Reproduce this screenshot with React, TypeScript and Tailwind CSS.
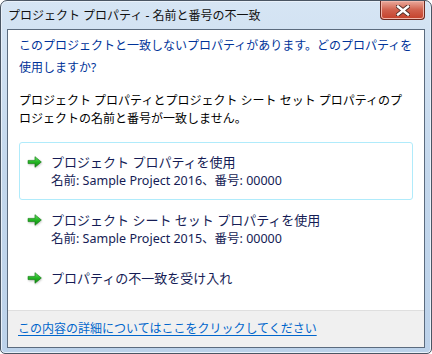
import React from "react";

const jp = { fontFamily: '"Noto Sans", "Noto Sans CJK JP", sans-serif' };

function GreenArrow() {
  return (
    <svg width="17" height="15" viewBox="0 0 16 14" className="shrink-0">
      <defs>
        <linearGradient id="ga" x1="0" y1="0" x2="0" y2="1">
          <stop offset="0" stopColor="#6be86b" />
          <stop offset="0.5" stopColor="#22b522" />
          <stop offset="1" stopColor="#138a13" />
        </linearGradient>
        <filter id="sh" x="-30%" y="-30%" width="160%" height="160%">
          <feGaussianBlur stdDeviation="0.9" />
        </filter>
      </defs>
      <path d="M1.5 6 H8 V2.5 L14 7.5 L8 12.5 V9 H1.5 Z" fill="#777" opacity="0.55" filter="url(#sh)" />
      <path d="M1 5 H7.5 V1.5 L13.5 6.5 L7.5 11.5 V8 H1 Z" fill="url(#ga)" stroke="#0f7a0f" strokeWidth="0.6" strokeLinejoin="round" />
    </svg>
  );
}

function CommandLink({ title, sub, active }: { title: string; sub?: string; active?: boolean }) {
  return (
    <div
      className={`mx-[11px] flex rounded-[3px] border pl-[7px] pt-[9px] pb-[9px] ${
        active ? "border-[#b0ebfb]" : "border-transparent"
      }`}
    >
      <div className="flex h-[20px] w-[24px] items-center">
        <GreenArrow />
      </div>
      <div className="flex flex-col text-[#151c55]">
        <div className="whitespace-nowrap text-[13px] leading-[20px]">{title}</div>
        {sub && <div className="whitespace-nowrap text-[12.5px] leading-[18px]">{sub}</div>}
      </div>
    </div>
  );
}

export default function App() {
  return (
    <div
      style={jp}
      className="flex h-[354px] w-[432px] flex-col rounded-t-[7px] rounded-b-[5px] border border-[#4a5563] bg-gradient-to-b from-[#d6e5f4] via-[#c3d7ec] to-[#bcd2ea] shadow-[inset_0_0_0_1px_#e9f1fa]"
    >
      <div className="flex h-[28px] items-start">
        <div className="flex-1 whitespace-nowrap pl-[7px] pt-[6px] text-[12px] leading-[18px] text-[#111]">
          プロジェクト プロパティ - 名前と番号の不一致
        </div>
        <div className="mr-[6px] flex h-[19px] w-[45px] items-center justify-center rounded-b-[4px] border border-t-0 border-[#6b2a20] bg-gradient-to-b from-[#e9a99c] via-[#d0604c] to-[#c4402a] shadow-[inset_0_0_0_1px_#f2b6aa]">
          <svg width="14" height="11" viewBox="0 0 14 11">
            <path d="M2 1.5 L12 9.5 M12 1.5 L2 9.5" stroke="#4a2a25" strokeWidth="4.2" strokeLinecap="square" />
            <path d="M2 1.5 L12 9.5 M12 1.5 L2 9.5" stroke="#ffffff" strokeWidth="2.4" strokeLinecap="square" />
          </svg>
        </div>
      </div>
      <div className="mx-[6px] flex h-[319px] flex-col border border-[#5b6b7e] bg-white">
        <div className="flex flex-1 flex-col">
          <div className="whitespace-nowrap pl-[11px] pt-[5px] text-[12px] leading-[22px] text-[#003399]">
            このプロジェクトと一致しないプロパティがあります。どのプロパティを
            <br />
            使用しますか?
          </div>
          <div className="mt-[13px] whitespace-nowrap pl-[11px] text-[12px] leading-[18px] text-black">
            プロジェクト プロパティとプロジェクト シート セット プロパティのプ
            <br />
            ロジェクトの名前と番号が一致しません。
          </div>
          <div className="mt-[14px] flex flex-col">
            <CommandLink title="プロジェクト プロパティを使用" sub="名前: Sample Project 2016、番号: 00000" active />
            <CommandLink title="プロジェクト シート セット プロパティを使用" sub="名前: Sample Project 2015、番号: 00000" />
            <CommandLink title="プロパティの不一致を受け入れ" />
          </div>
        </div>
        <div className="flex h-[37px] items-center border-t border-[#dfdfdf] bg-[#f0f0f0] pl-[10px]">
          <span className="whitespace-nowrap text-[12px] leading-[18px] text-[#0066cc] underline underline-offset-2">
            この内容の詳細についてはここをクリックしてください
          </span>
        </div>
      </div>
    </div>
  );
}
